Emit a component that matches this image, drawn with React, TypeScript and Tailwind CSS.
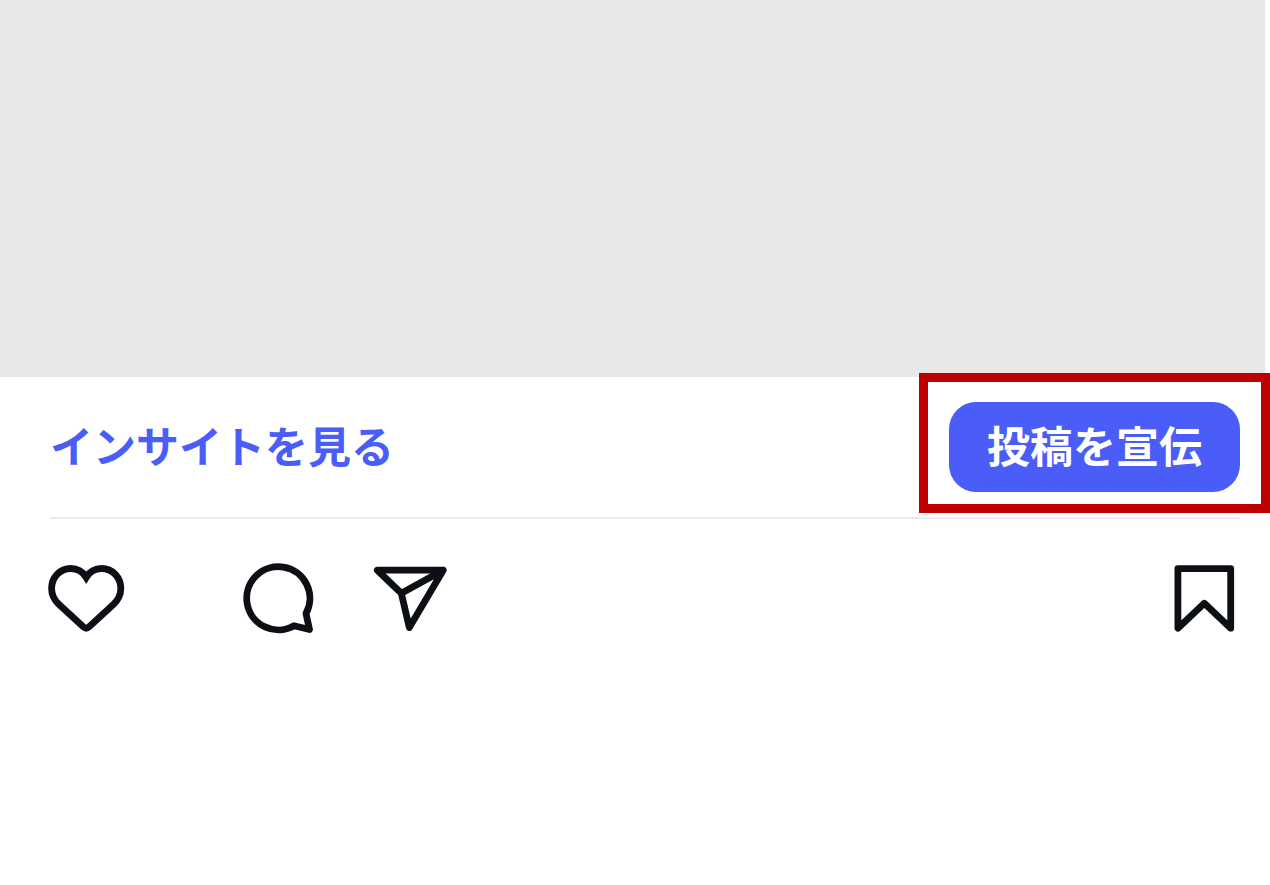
import type { ReactNode } from "react";

type IconButtonProps = {
  label: string;
  width: number;
  children: ReactNode;
};

function IconButton({ label, width, children }: IconButtonProps) {
  return (
    <button type="button" aria-label={label} className="block shrink-0 cursor-pointer">
      <svg
        width={width}
        height={72}
        viewBox={`0 0 ${width} 72`}
        fill="none"
        stroke="currentColor"
        strokeWidth={6.8}
        strokeLinecap="round"
        strokeLinejoin="round"
        aria-hidden="true"
      >
        {children}
      </svg>
    </button>
  );
}

export default function App() {
  return (
    <main className="min-h-screen bg-white font-['Noto_Sans_CJK_JP',sans-serif] text-[43px] leading-[64px] font-bold text-[#0c1014]">
      <div className="mr-[5px] h-[377px] bg-[#e8e8e8]" />

      <section className="mr-[30px] ml-[50px] flex h-[142px] items-center justify-between border-b-2 border-[#e9eaed]">
        <a href="#insights" className="pb-1.5 text-[#4a5df9]">
          インサイトを見る
        </a>
        <div className="relative">
          <button
            type="button"
            className="block h-[90px] cursor-pointer rounded-[27px] bg-[#4a5df9] px-[38px] pb-1.5 text-white"
          >
            投稿を宣伝
          </button>
          <div className="pointer-events-none absolute -top-[29px] -right-[30px] -bottom-[21px] -left-[30px] border-[9px] border-[#c00000]" />
        </div>
      </section>

      <section className="flex items-center justify-between pt-[43px] pr-[35px] pl-12">
        <div className="flex items-center">
          <IconButton label="いいね" width={77}>
            <path
              strokeLinejoin="miter"
              d="M38.2 15.4C34.8 9.7 29.5 6.5 22.8 6.5C11.8 6.5 3.6 15.5 3.6 26.5C3.6 32.8 6.2 37.9 10.8 42.2L35.5 65Q38.2 67.3 40.9 65L65.6 42.2C70.2 37.9 72.8 32.8 72.8 26.5C72.8 15.5 64.6 6.5 53.6 6.5C46.9 6.5 41.6 9.7 38.2 15.4Z"
            />
          </IconButton>
          <div className="ml-[118px] flex items-center gap-[59px]">
            <IconButton label="コメント" width={71}>
              <path d="M63 51.5A31.6 31.6 0 1 0 51 63.7L66.5 67.5Z" />
            </IconButton>
            <IconButton label="シェア" width={75}>
              <path d="M4.3 8.2H70.2L36.3 65.5L28.3 31.3ZM28.3 31.3L70.2 8.2" />
            </IconButton>
          </div>
        </div>
        <IconButton label="保存" width={62}>
          <path d="M4.9 6.6H57.7V66.2L31.3 41.3L4.9 66.2Z" />
        </IconButton>
      </section>
    </main>
  );
}
